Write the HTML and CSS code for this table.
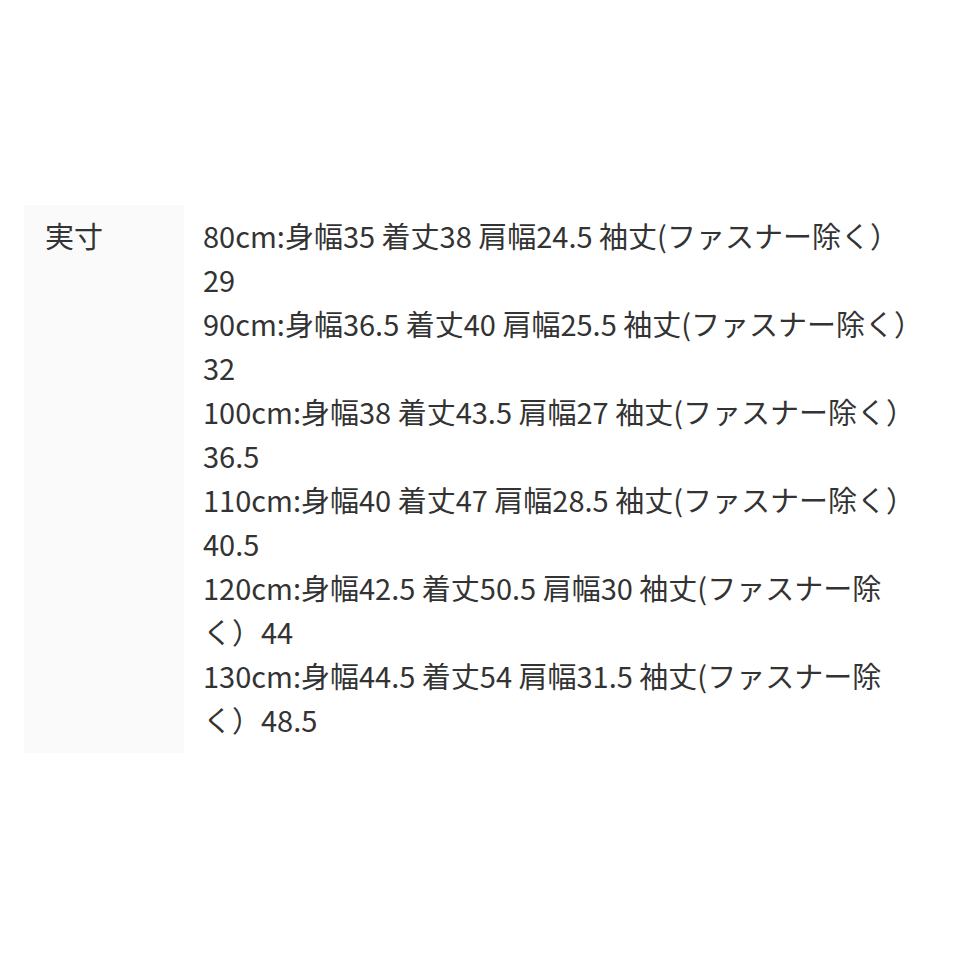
FILE: index.html
```html
<!DOCTYPE html>
<html lang="ja">
<head>
<meta charset="utf-8">
<link rel="stylesheet" href="styles.css">
</head>
<body>
<div class="spec">
  <div class="spec-head">実寸</div>
  <div class="spec-body">
    80cm:身幅35 着丈38 肩幅24.5 袖丈(ファスナー除く）29<br>
    90cm:身幅36.5 着丈40 肩幅25.5 袖丈(ファスナー除く）32<br>
    100cm:身幅38 着丈43.5 肩幅27 袖丈(ファスナー除く）36.5<br>
    110cm:身幅40 着丈47 肩幅28.5 袖丈(ファスナー除く）40.5<br>
    120cm:身幅42.5 着丈50.5 肩幅30 袖丈(ファスナー除く）44<br>
    130cm:身幅44.5 着丈54 肩幅31.5 袖丈(ファスナー除く）48.5
  </div>
</div>
</body>
</html>
```
FILE: styles.css
```css
html, body {
  margin: 0;
  padding: 0;
  background: #ffffff;
}
body {
  font-family: "Noto Sans CJK JP", "Noto Sans", sans-serif;
  color: #333333;
  font-size: 29px;
  line-height: 44px;
}
.spec {
  display: flex;
  margin: 205px 0 0 24px;
}
.spec-head {
  flex: 0 0 160px;
  box-sizing: border-box;
  background: #fafafa;
  padding: 8px 0 12px 21px;
}
.spec-body {
  flex: 0 0 721px;
  padding: 8px 0 12px 19px;
}
```
